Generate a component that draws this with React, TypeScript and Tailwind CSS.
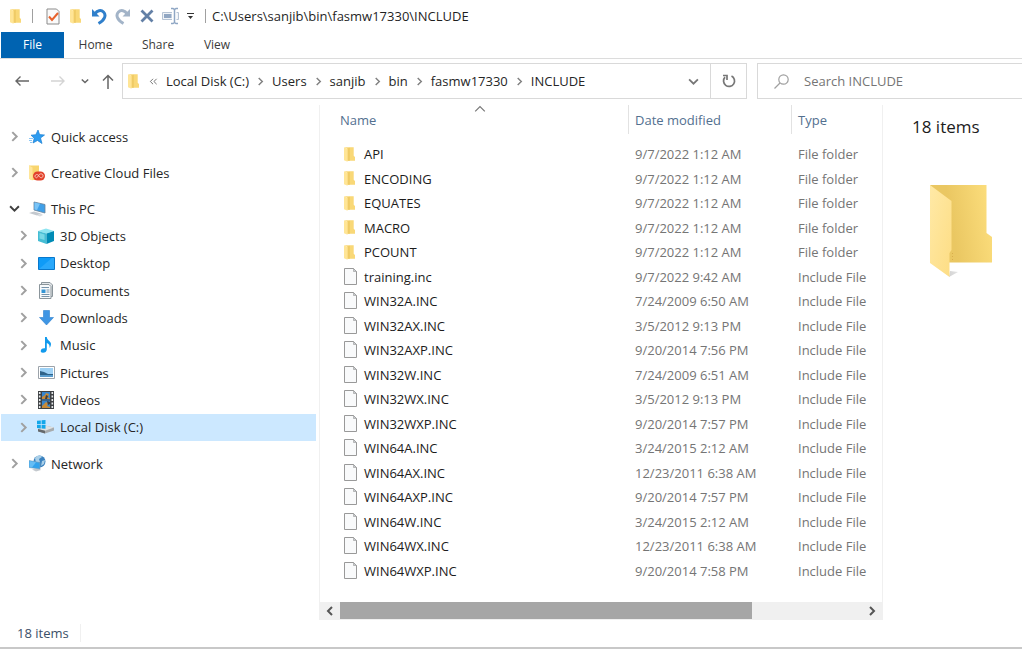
import React from "react";

type IconProps = { className?: string };

const SmallFolder = ({ className = "" }: IconProps) => (
  <svg viewBox="0 0 34 45" className={`h-[15px] w-[11px] shrink-0 ${className}`} aria-hidden="true">
    <path d="M1 0H30V26L34 30V42H9V4Z" fill="#f9d877" />
    <path d="M11 4L18 2V42H11Z" fill="#efcb66" />
    <path d="M0 0L11 5V45L0 40Z" fill="#ffe596" />
  </svg>
);

const FileIcon = () => (
  <svg viewBox="0 0 14 18" className="h-[18px] w-[14px] shrink-0" aria-hidden="true">
    <path d="M.5 .5H9.500L12.500 3.500V16.500H.5Z" fill="#f9fafb" stroke="#999999" />
    <path d="M9.500 .5V3.500H12.500Z" fill="#c9ccd0" stroke="#999999" strokeWidth="0.6" />
  </svg>
);

const Chevron = ({ d, className = "" }: { d: "right" | "left" | "down" | "up" | "double"; className?: string }) => {
  const paths = {
    right: "M3 1L7 5L3 9",
    left: "M7 1L3 5L7 9",
    down: "M1 3L5 7L9 3",
    up: "M1 7L5 3L9 7",
    double: "M4.500 2L1.500 5L4.500 8M8.500 2L5.500 5L8.500 8",
  };
  return (
    <svg viewBox="0 0 10 10" className={`shrink-0 fill-none stroke-current ${className}`} aria-hidden="true">
      <path d={paths[d]} />
    </svg>
  );
};

const Checklist = () => (
  <svg viewBox="0 0 14 17" className="h-[17px] w-[14px]" aria-hidden="true">
    <path d="M1 1H10.500L13 3.500V16H1Z" fill="#fafafa" stroke="#8b8b8b" />
    <path d="M3 8.500L6 12L12 5" fill="none" stroke="#e8622c" strokeWidth="2" />
  </svg>
);

const Undo = ({ className = "" }: IconProps) => (
  <svg viewBox="0 0 16 17" className={`h-[17px] w-4 ${className}`} aria-hidden="true">
    <path d="M1 1V8.500H8.500Z" fill="currentColor" />
    <path d="M4 6C6 2.500 10 1.500 12.500 4C15.500 7 14 12 7.500 15.500" fill="none" stroke="currentColor" strokeWidth="3" />
  </svg>
);

const Cross = () => (
  <svg viewBox="0 0 14 14" className="h-3.5 w-3.5" aria-hidden="true">
    <path d="M1.500 1.500L12.500 12.500M12.500 1.500L1.500 12.500" stroke="#6380a6" strokeWidth="2.800" />
  </svg>
);

const Rename = () => (
  <svg viewBox="0 0 17 18" className="h-[18px] w-[17px]" aria-hidden="true">
    <path d="M10 5.500H.5V12.500H10M14.500 5.500H16.500V12.500H14.500" fill="#f0f3f7" stroke="#b5c3d4" />
    <path d="M2 7H9.500V11H2Z" fill="#91a7c3" />
    <path d="M9 1.500H11L12.500 2.500L14 1.500H16M9 16.500H11L12.500 15.500L14 16.500H16M12.500 2.500V15.500" fill="none" stroke="#8ea6c4" strokeWidth="1.500" />
  </svg>
);

const StarIcon = () => (
  <svg viewBox="0 0 16 16" className="h-4 w-4" aria-hidden="true">
    <path d="M9 1L10.600 5.600L15.500 6L11.500 9L13 14.500L8.500 11.500L4 14L5.200 9.200L2 6.200L6.800 5.700Z" fill="#2d9cf0" stroke="#1b7fd2" strokeWidth=".7" />
    <path d="M0 9.500H4M0 11.500H3M1 13.500H3" stroke="#8cc7f5" />
  </svg>
);

const CloudFolder = () => (
  <svg viewBox="0 0 16 16" className="h-4 w-4" aria-hidden="true">
    <path d="M0 .5H10V15H2L0 13Z" fill="#f8d56f" />
    <path d="M0 .5L3.500 2.500V15.500L0 14Z" fill="#ffe69a" />
    <rect x="4" y="6.500" width="12" height="9" rx="4.500" fill="#e2412b" />
    <path d="M6 11.500C6 9 9 9 10 11S13.500 13.500 14 11S10.500 8 9.500 10.500S7 13.500 6 11.500" fill="none" stroke="#fbd3c8" strokeWidth=".9" />
  </svg>
);

const PcIcon = () => (
  <svg viewBox="0 0 17 16" className="h-4 w-[17px]" aria-hidden="true">
    <path d="M5 1L16 3.500V12L5 9Z" fill="#3f9fe8" stroke="#6a8296" strokeWidth=".8" />
    <path d="M5.500 1.500L11 2.800L8 9L5.500 8.500Z" fill="#79c4f7" />
    <path d="M0 12L5 10.500L12 12.500L8 14.500Z" fill="#c4c9cf" />
    <path d="M8 14.500L12 12.500L14 14L11 15.500Z" fill="#d9dce0" />
  </svg>
);

const CubeIcon = () => (
  <svg viewBox="0 0 16 16" className="h-4 w-4" aria-hidden="true">
    <path d="M0 3L8 .5L16 3L8.500 5.500Z" fill="#8ee5f1" />
    <path d="M0 3L8.500 5.500V16L0 13Z" fill="#45bdd4" />
    <path d="M16 3L8.500 5.500V16L16 13Z" fill="#008bb5" />
    <path d="M1.500 5L6.500 6.500V12L1.500 10.500Z" fill="#78d8e6" />
  </svg>
);

const DesktopIcon = () => (
  <svg viewBox="0 0 17 13" className="h-[13px] w-[17px]" aria-hidden="true">
    <path d="M.5 .5H16.500V12.500H.5Z" fill="#0f9bf7" stroke="#0878cc" />
    <path d="M1 12L14 1H16V12Z" fill="#29a8fb" />
  </svg>
);

const DocumentIcon = () => (
  <svg viewBox="0 0 14 17" className="h-[17px] w-[14px]" aria-hidden="true">
    <path d="M2.500 .5H11L13.500 3V14.500H2.500Z" fill="#e4e8eb" stroke="#8b959b" />
    <path d="M.5 2.500H10L12 4.500V16.500H.5Z" fill="#f8fafb" stroke="#8b959b" />
    <path d="M2.500 5.500H10M7.500 8H10.500M7.500 10H10.500M2.500 12.500H10.500M2.500 14.500H10.500" stroke="#7894aa" />
    <path d="M2.500 7.500H6.500V11H2.500Z" fill="#3495d4" />
  </svg>
);

const DownloadIcon = () => (
  <svg viewBox="0 0 15 16" className="h-4 w-[15px]" aria-hidden="true">
    <path d="M4.500 .5H10.500V7.500H14.500L7.500 15L.5 7.500H4.500Z" fill="#3f96e4" stroke="#2b7fce" strokeWidth=".6" />
  </svg>
);

const MusicIcon = () => (
  <svg viewBox="0 0 12 16" className="h-4 w-3" aria-hidden="true">
    <path d="M5 0H6.800C7 3.500 11 4 11 7C11 9 10 10 9.500 11C10 8.500 9 6.500 6.800 6V12.500C6.800 14.500 5 15.800 3 15.800C1.300 15.800 .5 14.800 .8 13.500C1.200 11.800 3 11 5 11.300Z" fill="#119aed" />
  </svg>
);

const PictureIcon = () => (
  <svg viewBox="0 0 17 13" className="h-[13px] w-[17px]" aria-hidden="true">
    <path d="M.5 .5H16.500V12.500H.5Z" fill="#fff" stroke="#9ca3aa" />
    <path d="M2 2H15V11H2Z" fill="#9ed1f5" />
    <path d="M2 5L6 6L10 8L15 8V11H2Z" fill="#2f6288" />
    <path d="M2 9H15V11H2Z" fill="#5a9ccd" />
  </svg>
);

const VideoIcon = () => (
  <svg viewBox="0 0 16 18" className="h-[18px] w-4" aria-hidden="true">
    <path d="M0 0H16V18H0Z" fill="#3e4144" />
    <path d="M4 1H12V8.500H4ZM4 9.500H12V17H4Z" fill="#3685cf" />
    <path d="M4 6L7 4L8 2L11 3L10 6L12 8H4ZM4 15L8 11L10 12L9 15L12 16V17H4Z" fill="#c88a38" />
    <path d="M8 4L10 5L9 8H7ZM9 10L12 11V13L10 14Z" fill="#3d3b3c" />
    <path d="M1.700 1V17M14.300 1V17" stroke="#e6e8e9" strokeWidth="1.600" strokeDasharray="2 1.500" />
  </svg>
);

const DiskIcon = () => (
  <svg viewBox="0 0 18 14" className="h-3.5 w-[18px]" aria-hidden="true">
    <path d="M1 9L8 5.500L17 7.500V10.500L8 13.500L1 11Z" fill="#a7abad" />
    <path d="M1 9L8 5.500L17 7.500L8 10.800Z" fill="#dfe2e3" />
    <path d="M1 9L8 10.800V13.500L1 11.500Z" fill="#65696c" />
    <path d="M0 .8L3.800 .4V4H0ZM4.600 .3L8.500 0V4H4.600ZM0 4.800H3.800V8.400L0 8ZM4.600 4.800H8.500V8.800L4.600 8.400Z" fill="#12a7ea" />
  </svg>
);

const NetworkIcon = () => (
  <svg viewBox="0 0 17 17" className="h-[17px] w-[17px]" aria-hidden="true">
    <circle cx="10.500" cy="6.500" r="6" fill="#3b82bf" />
    <path d="M6 3C8 0 12 0 13 2L10 4L11 7L7 8ZM13 6L16 5L15 9L12 11Z" fill="#a9cfe8" />
    <path d="M3 14.500L10 13L12 15L7 16.500Z" fill="#c4c9ce" />
    <path d="M0 5.500L11 7.500V14L0 12.500Z" fill="#32a2ec" stroke="#7da0b8" strokeWidth=".6" />
    <path d="M.5 6L7 7.200L3 12.500L.5 12Z" fill="#65bdf5" />
  </svg>
);

const LargeFolder = () => (
  <svg viewBox="0 0 70 93" className="h-[93px] w-[70px]" role="img" aria-label="Folder">
    <defs>
      <linearGradient id="folder-back" x1="0" x2="1" y1="0.300" y2="0.100">
        <stop offset="0.300" stopColor="#eac762" />
        <stop offset="1" stopColor="#fddf7e" />
      </linearGradient>
      <linearGradient id="folder-front" x1="0" x2="1" y1="0" y2="1">
        <stop offset="0" stopColor="#ffe9a6" />
        <stop offset="1" stopColor="#fddd84" />
      </linearGradient>
      <linearGradient id="folder-shade" x1="0" x2="1">
        <stop offset="0" stopColor="#d4d4d4" />
        <stop offset="1" stopColor="#ffffff" stopOpacity="0" />
      </linearGradient>
    </defs>
    <path d="M61 74L69 74L61 78H55ZM20 86L28 87L19 92Z" fill="url(#folder-shade)" />
    <path d="M0 0H56.500V48L62 52V77.500H18Z" fill="url(#folder-back)" />
    <path d="M0 0L21.500 16V65L19.500 68V92L0 78Z" fill="url(#folder-front)" />
    <path d="M22.500 68V77" stroke="#d9ae4c" strokeDasharray="1 2" />
  </svg>
);

type TreeItem = { label: string; icon: React.ReactNode; open?: boolean; selected?: boolean };

const children: TreeItem[] = [
  { label: "3D Objects", icon: <CubeIcon /> },
  { label: "Desktop", icon: <DesktopIcon /> },
  { label: "Documents", icon: <DocumentIcon /> },
  { label: "Downloads", icon: <DownloadIcon /> },
  { label: "Music", icon: <MusicIcon /> },
  { label: "Pictures", icon: <PictureIcon /> },
  { label: "Videos", icon: <VideoIcon /> },
  { label: "Local Disk (C:)", icon: <DiskIcon />, selected: true },
];

const TreeRow = ({ item, nested = false }: { item: TreeItem; nested?: boolean }) => (
  <button
    type="button"
    className={`flex min-h-[27px] w-full flex-1 items-center text-left ${nested ? "pl-[15px]" : "pl-1.5"} ${item.selected ? "bg-[#cce8ff]" : ""}`}
  >
    <span className="flex w-3.5 justify-center">
      <Chevron d={item.open ? "down" : "right"} className={`h-[11px] w-[11px] stroke-[1.8] ${item.open ? "text-[#404040]" : "text-[#a0a0a0]"}`} />
    </span>
    <span className="ml-[7px] flex w-[18px] justify-center">{item.icon}</span>
    <span className="ml-[5px]">{item.label}</span>
  </button>
);

type Entry = { name: string; date: string; type: string };

const folder = (name: string): Entry => ({ name, date: "9/7/2022 1:12 AM", type: "File folder" });
const include = (name: string, date: string): Entry => ({ name, date, type: "Include File" });

const entries: Entry[] = [
  folder("API"),
  folder("ENCODING"),
  folder("EQUATES"),
  folder("MACRO"),
  folder("PCOUNT"),
  include("training.inc", "9/7/2022 9:42 AM"),
  include("WIN32A.INC", "7/24/2009 6:50 AM"),
  include("WIN32AX.INC", "3/5/2012 9:13 PM"),
  include("WIN32AXP.INC", "9/20/2014 7:56 PM"),
  include("WIN32W.INC", "7/24/2009 6:51 AM"),
  include("WIN32WX.INC", "3/5/2012 9:13 PM"),
  include("WIN32WXP.INC", "9/20/2014 7:57 PM"),
  include("WIN64A.INC", "3/24/2015 2:12 AM"),
  include("WIN64AX.INC", "12/23/2011 6:38 AM"),
  include("WIN64AXP.INC", "9/20/2014 7:57 PM"),
  include("WIN64W.INC", "3/24/2015 2:12 AM"),
  include("WIN64WX.INC", "12/23/2011 6:38 AM"),
  include("WIN64WXP.INC", "9/20/2014 7:58 PM"),
];

const crumbs = ["Local Disk (C:)", "Users", "sanjib", "bin", "fasmw17330", "INCLUDE"];

const TitleBar = () => (
  <header className="flex h-8 items-center pl-2.5">
    <SmallFolder />
    <span className="ml-[11px] h-3.5 w-px bg-[#a0a0a0]" />
    <button type="button" aria-label="Properties" className="ml-[13px]"><Checklist /></button>
    <button type="button" aria-label="New folder" className="ml-2.5"><SmallFolder /></button>
    <button type="button" aria-label="Undo" className="ml-2.5 text-[#2f7fcb]"><Undo /></button>
    <button type="button" aria-label="Redo" className="ml-2 text-[#a3b4c8]"><Undo className="-scale-x-100" /></button>
    <button type="button" aria-label="Delete" className="ml-[9px]"><Cross /></button>
    <button type="button" aria-label="Rename" className="ml-2"><Rename /></button>
    <button type="button" aria-label="Customize toolbar" className="ml-2">
      <svg viewBox="0 0 7 7" className="h-[7px] w-[7px]" aria-hidden="true">
        <path d="M0 .5H7" stroke="#333" />
        <path d="M1 3H6L3.500 6Z" fill="#333" />
      </svg>
    </button>
    <span className="ml-[11px] h-3.5 w-px bg-[#a0a0a0]" />
    <h1 className="ml-1.5 text-[#1f1f1f]">C:\Users\sanjib\bin\fasmw17330\INCLUDE</h1>
  </header>
);

const Ribbon = () => (
  <nav aria-label="Ribbon" className="flex h-[27px] border-b border-[#dcdcdc] pl-px text-[12px] text-[#3b3b3b]">
    <button type="button" className="w-[63px] bg-[#0063b1] text-white">File</button>
    <button type="button" className="w-[63px]">Home</button>
    <button type="button" className="w-[62px]">Share</button>
    <button type="button" className="w-14">View</button>
  </nav>
);

const AddressRow = () => (
  <div className="flex pt-1">
    <div className="flex w-[122px] shrink-0 items-center pl-[15px] text-[#666]">
      <button type="button" aria-label="Back">
        <svg viewBox="0 0 15 12" className="h-3 w-[15px] fill-none stroke-current stroke-[1.4]" aria-hidden="true"><path d="M14 6H1M5.500 1.500L1 6L5.500 10.500" /></svg>
      </button>
      <button type="button" aria-label="Forward" className="ml-5 text-[#d4d4d4]">
        <svg viewBox="0 0 15 12" className="h-3 w-[15px] fill-none stroke-current stroke-[1.4]" aria-hidden="true"><path d="M1 6H14M9.500 1.500L14 6L9.500 10.500" /></svg>
      </button>
      <button type="button" aria-label="Recent locations" className="ml-4"><Chevron d="down" className="h-2 w-2 stroke-[1.8]" /></button>
      <button type="button" aria-label="Up" className="ml-[13px]">
        <svg viewBox="0 0 12 15" className="h-[15px] w-3 fill-none stroke-current stroke-[1.5]" aria-hidden="true"><path d="M6 15V1.500M1 6.500L6 1.500L11 6.500" /></svg>
      </button>
    </div>
    <div className="flex h-9 min-w-0 flex-1 items-center border border-[#d9d9d9] pl-[5px] text-[#262626]">
      <SmallFolder />
      <Chevron d="double" className="ml-2.5 h-[9px] w-[9px] text-[#666]" />
      <nav aria-label="Path" className="ml-2 flex items-center">
        {crumbs.map((crumb, index) => (
          <React.Fragment key={crumb}>
            {index > 0 && <Chevron d="right" className="mx-[7px] h-[9px] w-[9px] stroke-[1.6] text-[#808080]" />}
            <a href="#" className="whitespace-nowrap">{crumb}</a>
          </React.Fragment>
        ))}
      </nav>
      <button type="button" aria-label="Previous locations" className="ml-auto flex w-[33px] justify-center text-[#777]">
        <Chevron d="down" className="h-[11px] w-[11px] stroke-[1.6]" />
      </button>
      <button type="button" aria-label="Refresh" className="flex w-9 items-center justify-center self-stretch border-l border-[#d9d9d9] text-[#777]">
        <svg viewBox="0 0 14 14" className="h-3.5 w-3.5 fill-none stroke-current stroke-[1.7]" aria-hidden="true">
          <path d="M9.500 2A5.500 5.500 0 1 1 3 3.200M1 1.500H5V6" />
        </svg>
      </button>
    </div>
    <label className="ml-2.5 flex h-9 w-[265px] shrink-0 items-center border border-r-0 border-[#d9d9d9] pl-4">
      <svg viewBox="0 0 15 15" className="h-[15px] w-[15px] fill-none stroke-[#a0a0a0] stroke-[1.2]" aria-hidden="true">
        <circle cx="9.500" cy="5.500" r="4.700" />
        <path d="M6 9L.5 14.500" />
      </svg>
      <input
        type="search"
        aria-label="Search INCLUDE"
        placeholder="Search INCLUDE"
        className="ml-[15px] min-w-0 flex-1 bg-transparent outline-none placeholder:text-[#757575]"
      />
    </label>
  </div>
);

const Sidebar = () => (
  <nav aria-label="Folders" className="flex w-[319px] shrink-0 flex-col gap-[9px] pt-[18px] pr-[3px] pl-px text-[#262626]">
    <div className="flex"><TreeRow item={{ label: "Quick access", icon: <StarIcon /> }} /></div>
    <div className="flex"><TreeRow item={{ label: "Creative Cloud Files", icon: <CloudFolder /> }} /></div>
    <div className="flex h-[246px] flex-col">
      <TreeRow item={{ label: "This PC", icon: <PcIcon />, open: true }} />
      {children.map((item) => <TreeRow key={item.label} item={item} nested />)}
    </div>
    <div className="flex"><TreeRow item={{ label: "Network", icon: <NetworkIcon /> }} /></div>
  </nav>
);

const FileList = () => (
  <section className="flex min-w-0 flex-1 flex-col border-x border-[#f0f0f0]">
    <table className="h-[478px] w-full table-fixed border-collapse text-left">
      <colgroup>
        <col />
        <col className="w-[163px]" />
        <col className="w-[91px]" />
      </colgroup>
      <thead className="text-[#53708f]">
        <tr className="h-[37px]">
          <th className="relative h-[37px] p-0 align-top font-normal">
            <span className="flex h-[29px] items-center pl-5">Name</span>
            <Chevron d="up" className="absolute top-[-2px] left-1/2 h-3 w-3 text-[#777]" />
          </th>
          <th className="p-0 align-top font-normal"><span className="flex h-[29px] items-center border-l border-[#e2e2e2] pl-1.5">Date modified</span></th>
          <th className="p-0 align-top font-normal"><span className="flex h-[29px] items-center border-l border-[#e2e2e2] pl-1.5">Type</span></th>
        </tr>
      </thead>
      <tbody>
        {entries.map((entry) => (
          <tr key={entry.name}>
            <td className="p-0 pl-6 text-[#1c1c1c]">
              <span className="flex items-center gap-1.5">
                <span className="w-3.5">{entry.type === "File folder" ? <SmallFolder /> : <FileIcon />}</span>
                {entry.name}
              </span>
            </td>
            <td className="p-0 pl-[7px] whitespace-nowrap text-[#757575]">{entry.date}</td>
            <td className="p-0 pl-[7px] whitespace-nowrap text-[#757575]">{entry.type}</td>
          </tr>
        ))}
      </tbody>
    </table>
    <div className="mt-auto flex h-[18px] bg-[#f0f0f0] text-[#555]">
      <button type="button" aria-label="Scroll left" className="flex w-5 items-center justify-center"><Chevron d="left" className="h-2.5 w-2.5 stroke-2" /></button>
      <div className="flex-1"><div className="h-[17px] w-[79%] bg-[#a6a6a6]" /></div>
      <button type="button" aria-label="Scroll right" className="flex w-5 items-center justify-center"><Chevron d="right" className="h-2.5 w-2.5 stroke-2" /></button>
    </div>
  </section>
);

export default function App() {
  return (
    <div className="flex min-h-screen flex-col border-b-2 border-[#c8c8c8] bg-white font-['Open_Sans','Noto_Sans',sans-serif] text-[13px] leading-[18px]">
      <TitleBar />
      <Ribbon />
      <AddressRow />
      <main className="flex flex-1 pt-1.5">
        <Sidebar />
        <FileList />
        <aside className="w-[139px] shrink-0 pt-2.5 pl-[29px]">
          <h2 className="text-[17px] leading-6 text-[#1c1c1c]">18 items</h2>
          <div className="mt-[46px] ml-[18px]"><LargeFolder /></div>
        </aside>
      </main>
      <footer className="flex h-[27px] items-center pb-0.5 pl-[17px] text-[#3b5068]">
        <span className="border-r border-[#f0f0f0] pr-[11px]">18 items</span>
      </footer>
    </div>
  );
}
